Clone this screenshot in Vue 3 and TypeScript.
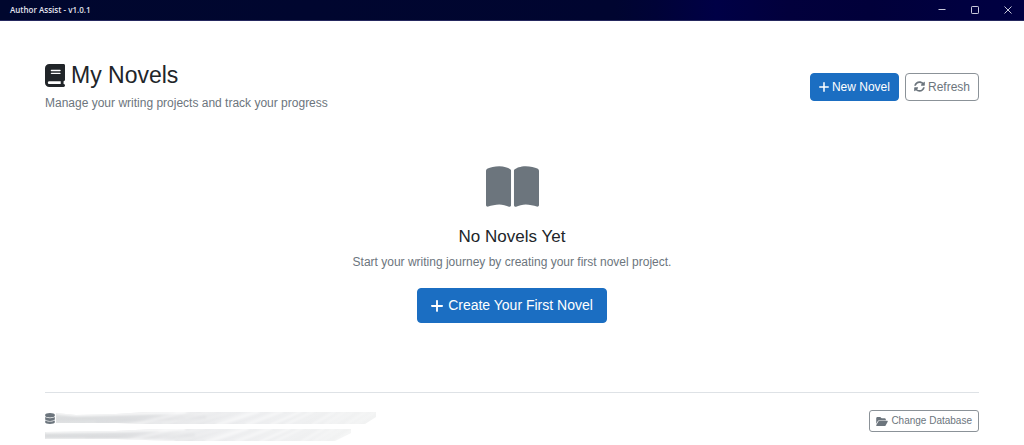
<script setup lang="ts">
import { ref } from 'vue'

interface Streak {
  x: number
  dx: number
  w: number
  o: number
}

const version = ref('1.0.1')

const makeStreaks = (end: number): Streak[] => {
  const list: Streak[] = []
  for (let i = 0, x = 60; x < end; i++, x += 8 + ((i * 5) % 9)) {
    list.push({ x, dx: Math.max(22, 75 - Math.round(x / 5)), w: 1 + (i % 3), o: 0.2 + ((i * 3) % 5) * 0.1 })
  }
  return list
}

const pathStreaks = makeStreaks(310)
const infoStreaks = makeStreaks(290)
</script>

<template>
  <div class="window">
    <header class="titlebar">
      <span class="app-name">Author Assist - v{{ version }}</span>
      <div class="controls">
        <button type="button" aria-label="Minimize">
          <svg viewBox="0 0 8 8"><path d="M0.5 3.5H7.5" /></svg>
        </button>
        <button type="button" aria-label="Maximize">
          <svg viewBox="0 0 8 8"><rect x="0.5" y="0.5" width="7" height="7" rx="0.7" /></svg>
        </button>
        <button type="button" aria-label="Close">
          <svg viewBox="0 0 8 8"><path d="M0.5 0.5L7.5 7.5M7.5 0.5L0.5 7.5" /></svg>
        </button>
      </div>
    </header>

    <main class="page">
      <section class="heading">
        <div>
          <h1>
            <svg class="icon-book" viewBox="0 0 448 512" aria-hidden="true"><path d="M96 0C43 0 0 43 0 96V416c0 53 43 96 96 96H384h32c17.700 0 32-14.300 32-32s-14.300-32-32-32V384c17.700 0 32-14.300 32-32V32c0-17.700-14.300-32-32-32H384 96zm0 384H352v64H96c-17.700 0-32-14.300-32-32s14.300-32 32-32zm32-240c0-8.800 7.200-16 16-16H336c8.800 0 16 7.200 16 16s-7.200 16-16 16H144c-8.800 0-16-7.200-16-16zm16 48H336c8.800 0 16 7.200 16 16s-7.200 16-16 16H144c-8.800 0-16-7.200-16-16s7.200-16 16-16z" /></svg>
            My Novels
          </h1>
          <p class="muted">Manage your writing projects and track your progress</p>
        </div>
        <div class="actions">
          <button type="button" class="btn primary">
            <svg class="icon-plus" viewBox="16 48 416 416" aria-hidden="true"><path d="M256 80c0-17.700-14.300-32-32-32s-32 14.300-32 32V224H48c-17.700 0-32 14.300-32 32s14.300 32 32 32H192V432c0 17.700 14.300 32 32 32s32-14.300 32-32V288H400c17.700 0 32-14.300 32-32s-14.300-32-32-32H256V80z" /></svg>
            New Novel
          </button>
          <button type="button" class="btn outline">
            <svg class="icon-sync" viewBox="0 0 512 512" aria-hidden="true"><path d="M370.720 133.280C339.458 104.008 298.888 87.962 255.848 88c-77.458.068-144.328 53.178-162.791 126.850-1.344 5.363-6.122 9.150-11.651 9.150H24.103c-7.498 0-13.194-6.807-11.807-14.176C33.933 94.924 134.813 8 256 8c66.448 0 126.791 26.136 171.315 68.685L463.030 40.970C478.149 25.851 504 36.559 504 57.941V192c0 13.255-10.745 24-24 24H345.941c-21.382 0-32.090-25.851-16.971-40.971l41.750-41.749zM32 296h134.059c21.382 0 32.090 25.851 16.971 40.971l-41.750 41.750c31.262 29.273 71.835 45.319 114.876 45.280 77.418-.070 144.315-53.144 162.787-126.849 1.344-5.363 6.122-9.150 11.651-9.150h57.304c7.498 0 13.194 6.807 11.807 14.176C478.067 417.076 377.187 504 256 504c-66.448 0-126.791-26.136-171.315-68.685L48.970 471.030C33.851 486.149 8 475.441 8 454.059V320c0-13.255 10.745-24 24-24z" /></svg>
            Refresh
          </button>
        </div>
      </section>

      <section class="empty">
        <svg class="icon-open" viewBox="0 32 576 441" aria-hidden="true"><path d="M249.600 471.500c10.800 3.800 22.400-4.100 22.400-15.500V78.600c0-4.200-1.600-8.400-5-11C247.400 52 202.400 32 144 32C93.500 32 46.300 45.300 18.100 56.100C6.800 60.500 0 71.700 0 83.800V454.100c0 11.900 12.800 20.200 24.100 16.500C55.600 460.100 105.500 448 144 448c33.900 0 79 14 105.600 23.500zm76.800 0C353 462 398.100 448 432 448c38.500 0 88.400 12.100 119.900 22.600c11.300 3.800 24.100-4.600 24.100-16.500V83.800c0-12.100-6.800-23.300-18.100-27.600C529.700 45.300 482.500 32 432 32c-58.400 0-103.400 20-123 35.600c-3.300 2.600-5 6.800-5 11V456c0 11.400 11.700 19.300 22.400 15.500z" /></svg>
        <h2>No Novels Yet</h2>
        <p class="muted">Start your writing journey by creating your first novel project.</p>
        <button type="button" class="btn primary large">
          <svg class="icon-plus" viewBox="16 48 416 416" aria-hidden="true"><path d="M256 80c0-17.700-14.300-32-32-32s-32 14.300-32 32V224H48c-17.700 0-32 14.300-32 32s14.300 32 32 32H192V432c0 17.700 14.300 32 32 32s32-14.300 32-32V288H400c17.700 0 32-14.300 32-32s-14.300-32-32-32H256V80z" /></svg>
          Create Your First Novel
        </button>
      </section>

      <footer class="footer">
        <div class="database">
          <div class="line">
            <svg class="icon-db" viewBox="0 0 448 512" aria-hidden="true"><path d="M448 80v48c0 44.200-100.300 80-224 80S0 172.200 0 128V80C0 35.800 100.300 0 224 0S448 35.800 448 80zM393.200 214.700c20.800-7.400 39.900-16.900 54.800-28.600V288c0 44.200-100.300 80-224 80S0 332.200 0 288V186.100c14.900 11.800 34 21.200 54.800 28.600C99.700 230.700 159.500 240 224 240s124.300-9.300 169.200-25.300zM0 346.100c14.900 11.800 34 21.200 54.800 28.600C99.700 390.700 159.500 400 224 400s124.300-9.300 169.200-25.300c20.800-7.400 39.900-16.900 54.800-28.600V432c0 44.200-100.300 80-224 80S0 476.200 0 432V346.100z" /></svg>
            <svg class="smear first" viewBox="0 0 320 12" aria-hidden="true">
              <defs>
                <linearGradient id="fade" x1="0" x2="1" y1="0" y2="0">
                  <stop offset="0" stop-color="#dfe1e2" />
                  <stop offset="0.35" stop-color="#e3e4e6" />
                  <stop offset="0.6" stop-color="#ebecee" />
                  <stop offset="1" stop-color="#f2f3f3" />
                </linearGradient>
                <filter id="soft" x="-5%" y="-50%" width="110%" height="200%">
                  <feGaussianBlur stdDeviation="0.8" />
                </filter>
                <clipPath id="clip-a"><path d="M0 1L20 3L60 2L90 0H320V5L309 12H90L60 11H0Z" /></clipPath>
              </defs>
              <g clip-path="url(#clip-a)">
                <rect width="320" height="12" fill="url(#fade)" />
                <g filter="url(#soft)">
                  <path class="edge" d="M0 1L20 3L60 2L130 0" />
                  <path class="grain" d="M0 6L150 4M0 8L130 7M40 10L150 6" />
                  <path v-for="s in pathStreaks" :key="s.x" class="streak" :d="`M${s.x} 13L${s.x + s.dx} -1`" :stroke-width="s.w" :stroke-opacity="s.o" />
                </g>
              </g>
            </svg>
          </div>
          <svg class="smear second" viewBox="0 0 306 12" aria-hidden="true">
            <defs>
              <clipPath id="clip-b"><path d="M0 3L70 2L110 0H306V4L290 12H130L70 10H0Z" /></clipPath>
            </defs>
            <g clip-path="url(#clip-b)">
              <rect width="306" height="12" fill="url(#fade)" />
              <g filter="url(#soft)">
                <path class="edge" d="M0 3L70 2L140 0M0 11L70 11L130 13" />
                <path class="grain" d="M0 6L150 5M0 8L130 8M40 9L150 7" />
                <path v-for="s in infoStreaks" :key="s.x" class="streak" :d="`M${s.x} 13L${s.x + s.dx} -1`" :stroke-width="s.w" :stroke-opacity="s.o" />
              </g>
            </g>
          </svg>
        </div>
        <button type="button" class="btn outline small">
          <svg class="icon-folder" viewBox="0 32 576 448" aria-hidden="true"><path d="M88.700 223.800L0 375.800V96C0 60.700 28.700 32 64 32H181.500c17 0 33.300 6.700 45.300 18.700l26.500 26.500c12 12 28.300 18.700 45.300 18.700H416c35.300 0 64 28.700 64 64v32H144c-22.800 0-43.800 12.100-55.300 31.800zm27.600 16.100C122.100 230 132.600 224 144 224H544c11.500 0 22 6.100 27.700 16.100s5.700 22.200-.1 32.100l-112 192C453.900 474 443.400 480 432 480H32c-11.500 0-22-6.100-27.700-16.100s-5.700-22.200 .1-32.100l112-192z" /></svg>
          Change Database
        </button>
      </footer>
    </main>
  </div>
</template>

<style>
body {
  margin: 0;
  background: #fff;
}
</style>

<style scoped>
.window {
  font-family: "Liberation Sans", Arial, sans-serif;
  font-size: 12px;
  line-height: 18px;
  color: #212529;
}

.titlebar {
  display: flex;
  align-items: center;
  justify-content: space-between;
  box-sizing: border-box;
  height: 21px;
  padding-left: 10px;
  background: linear-gradient(90deg, #00072e 0%, #000530 60%, #000337 64%, #000046 70%, #02003c 77%, #01003a 85%, #000040 94%, #000042 100%);
  border-bottom: 1px solid #25285e;
}

.app-name {
  font-family: "Open Sans", sans-serif;
  font-size: 8px;
  font-weight: 600;
  color: #e3e4ee;
}

.controls {
  display: flex;
}

.controls button {
  display: flex;
  align-items: center;
  justify-content: center;
  width: 33px;
  height: 20px;
  padding: 0;
  border: 0;
  background: none;
}

.controls svg {
  width: 8px;
  height: 8px;
  fill: none;
  stroke: #c9cadb;
}

.page {
  padding: 40px 45px 4px;
}

.heading {
  display: flex;
  align-items: center;
  justify-content: space-between;
}

h1,
h2,
p {
  margin: 0;
  font-weight: 400;
}

h1 {
  display: flex;
  align-items: center;
  gap: 6px;
  font-size: 23px;
  line-height: 28px;
  margin-bottom: 5px;
}

svg {
  flex: none;
  fill: currentColor;
}

.icon-book {
  width: 20px;
  height: 23px;
}

.muted {
  color: #6c757d;
}

.actions {
  display: flex;
  gap: 6px;
}

.btn {
  display: inline-flex;
  align-items: center;
  gap: 3px;
  padding: 4px 8px;
  border: 1px solid;
  border-radius: 4px;
  font: inherit;
  white-space: nowrap;
}

.primary {
  color: #fff;
  background: #1b6ec2;
  border-color: #1b6ec2;
}

.outline {
  color: #6c757d;
  background: #fff;
  border-color: #8b9298;
}

.icon-plus {
  width: 10px;
  height: 10px;
}

.icon-sync {
  width: 11px;
  height: 11px;
}

.empty {
  display: flex;
  flex-direction: column;
  align-items: center;
  padding: 54px 0 69px;
}

.icon-open {
  width: 53px;
  height: 41px;
  color: #6c757d;
  margin-bottom: 19px;
}

h2 {
  font-size: 17px;
  line-height: 22px;
  margin-bottom: 5px;
}

.large {
  gap: 5px;
  margin-top: 17px;
  padding: 5px 13px;
  font-size: 14px;
  line-height: 23px;
}

.large .icon-plus {
  width: 12px;
  height: 12px;
}

.footer {
  display: flex;
  align-items: flex-start;
  justify-content: space-between;
  padding-top: 17px;
  border-top: 1px solid #dee2e6;
}

.database {
  padding-top: 2px;
}

.line {
  display: flex;
  align-items: center;
  gap: 1px;
  margin-bottom: 5px;
}

.icon-db {
  width: 10px;
  height: 11px;
  color: #6c757d;
}

.smear {
  display: block;
  height: 12px;
}

.first {
  width: 320px;
}

.second {
  width: 306px;
}

.grain {
  fill: none;
  stroke: #cfd1d4;
  stroke-opacity: 0.6;
}

.edge {
  fill: none;
  stroke: #fff;
  stroke-width: 2px;
}

.streak {
  stroke: #fff;
}

.small {
  padding: 2px 6px;
  border-radius: 3px;
  font-size: 10px;
  line-height: 16px;
}

.icon-folder {
  width: 12px;
  height: 9px;
}
</style>
